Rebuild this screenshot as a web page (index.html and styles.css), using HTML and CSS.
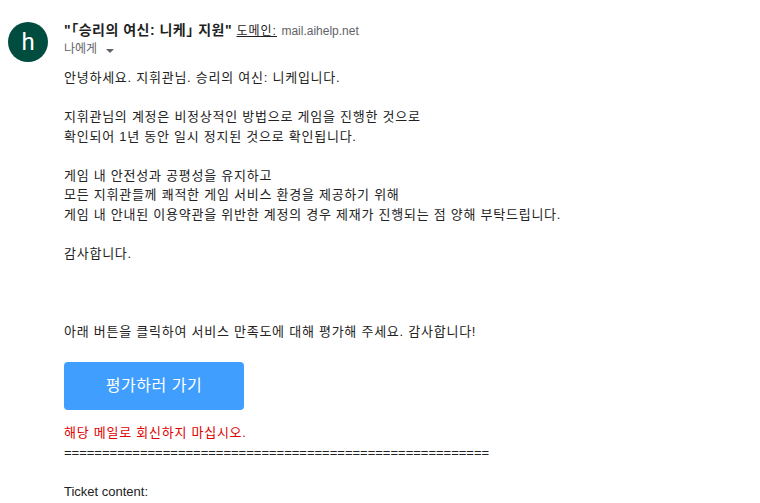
FILE: index.html
```html
<!DOCTYPE html>
<html lang="ko">
<head>
<meta charset="utf-8">
<title>메일</title>
<link rel="stylesheet" href="styles.css">
</head>
<body>
<div class="mail">
  <div class="avatar">h</div>
  <div class="content">
    <div class="sender-line">
      <span class="sender-name">"「승리의 여신: 니케」 지원"</span>
      <span class="domain-label">도메인:</span>
      <span class="domain">mail.aihelp.net</span>
    </div>
    <div class="recipient-line">
      <span class="recipient">나에게</span>
      <span class="caret"></span>
    </div>
    <div class="body">
      <div>안녕하세요. 지휘관님. 승리의 여신: 니케입니다.</div>
      <div class="blank"></div>
      <div>지휘관님의 계정은 비정상적인 방법으로 게임을 진행한 것으로</div>
      <div>확인되어 1년 동안 일시 정지된 것으로 확인됩니다.</div>
      <div class="blank"></div>
      <div>게임 내 안전성과 공평성을 유지하고</div>
      <div>모든 지휘관들께 쾌적한 게임 서비스 환경을 제공하기 위해</div>
      <div>게임 내 안내된 이용약관을 위반한 계정의 경우 제재가 진행되는 점 양해 부탁드립니다.</div>
      <div class="blank"></div>
      <div>감사합니다.</div>
      <div class="blank"></div>
      <div class="blank"></div>
      <div class="blank"></div>
      <div>아래 버튼을 클릭하여 서비스 만족도에 대해 평가해 주세요. 감사합니다!</div>
      <a class="rate-button" href="#">평가하러 가기</a>
      <div class="warning">해당 메일로 회신하지 마십시오.</div>
      <div class="latin">========================================================</div>
      <div class="blank"></div>
      <div class="latin">Ticket content:</div>
    </div>
  </div>
</div>
</body>
</html>
```

FILE: styles.css
```css
html, body {
  margin: 0;
  padding: 0;
  background: #ffffff;
}

body {
  font-family: "Liberation Sans", "Noto Sans CJK KR", sans-serif;
  color: #222222;
}

.mail {
  display: flex;
  align-items: flex-start;
  padding: 20px 0 0 8px;
}

.avatar {
  flex: 0 0 40px;
  width: 40px;
  height: 40px;
  margin-top: 2px;
  margin-right: 16px;
  border-radius: 50%;
  background: #004d3f;
  color: #ffffff;
  font-family: Roboto, "Liberation Sans", sans-serif;
  font-size: 24px;
  line-height: 40px;
  text-align: center;
}

.content {
  display: flex;
  flex-direction: column;
}

.sender-line {
  height: 20px;
  line-height: 20px;
  white-space: nowrap;
}

.sender-name {
  font-size: 14px;
  font-weight: bold;
  color: #1f1f1f;
  font-feature-settings: "halt";
  letter-spacing: 0.5px;
}

.domain-label {
  font-size: 12px;
  color: #222222;
  text-decoration: underline;
  letter-spacing: 1px;
}

.domain {
  font-size: 12px;
  color: #5f6368;
}

.recipient-line {
  display: flex;
  align-items: center;
  gap: 9px;
  height: 18px;
  line-height: 18px;
}

.recipient {
  font-size: 12px;
  color: #5f6368;
}

.caret {
  width: 0;
  height: 0;
  margin-top: 3px;
  border-left: 4px solid transparent;
  border-right: 4px solid transparent;
  border-top: 4px solid #5f6368;
}

.body {
  display: flex;
  flex-direction: column;
  align-items: flex-start;
  margin-top: 10px;
  font-size: 13px;
  line-height: 19.5px;
  letter-spacing: 0.75px;
  white-space: nowrap;
}

.latin {
  letter-spacing: 0;
}

.blank {
  height: 19.5px;
}

.rate-button {
  display: flex;
  align-items: center;
  justify-content: center;
  width: 180px;
  height: 48px;
  margin: 21px 0 13px;
  border-radius: 4px;
  background: #409eff;
  color: #ffffff;
  font-size: 16px;
  letter-spacing: 0.5px;
  text-decoration: none;
}

.warning {
  color: #e00000;
}
```
